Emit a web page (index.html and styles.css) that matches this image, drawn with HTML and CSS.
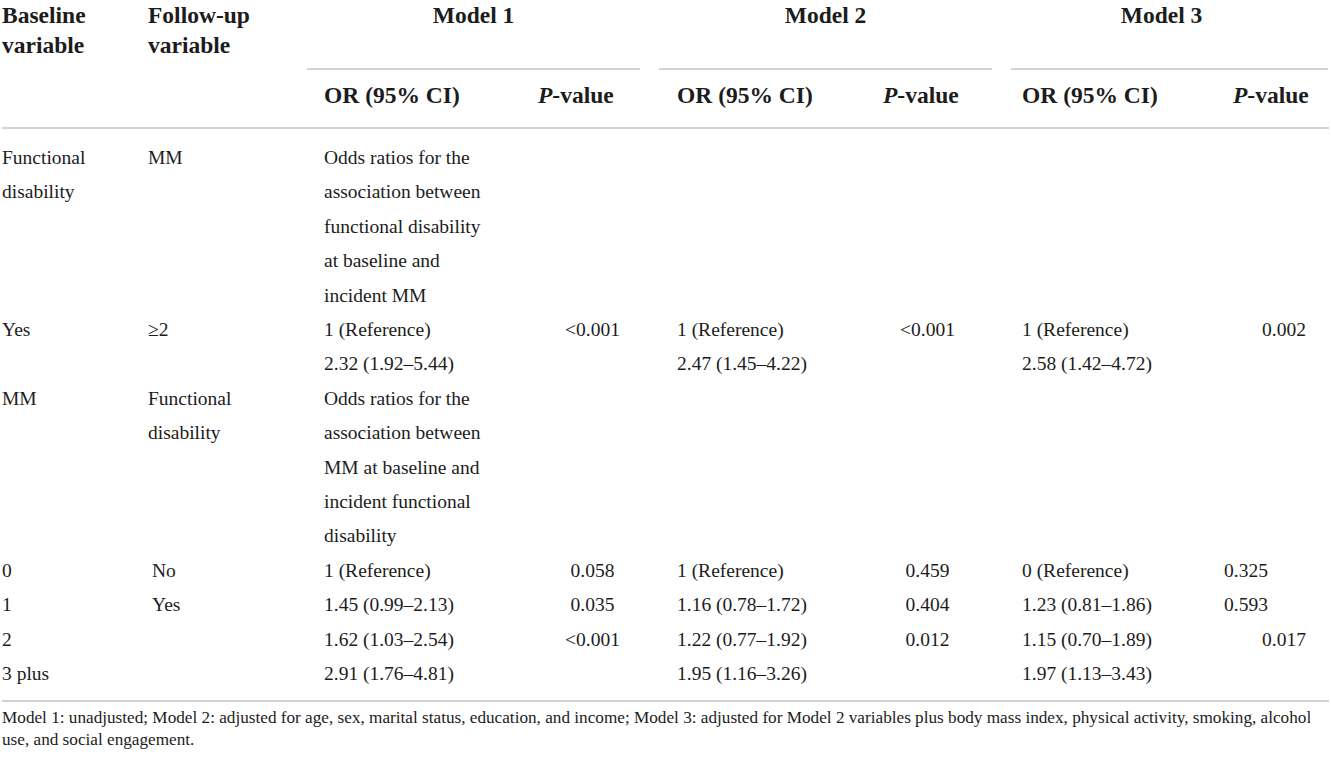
FILE: index.html
```html
<!DOCTYPE html>
<html lang="en">
<head>
  <meta charset="UTF-8" />
  <title>Odds ratios: functional disability and MM</title>
  <link rel="stylesheet" href="styles.css">
</head>
<body>
  <table class="results">
    <colgroup>
      <col class="c-base">
      <col class="c-follow">
      <col class="c-or1">
      <col class="c-p1">
      <col class="c-or2">
      <col class="c-p2">
      <col class="c-or3">
      <col class="c-p3">
    </colgroup>
    <thead>
      <tr class="head-top">
        <th class="var">Baseline<br>variable</th>
        <th class="var">Follow-up<br>variable</th>
        <th colspan="2" class="group"><div class="model m1">Model 1</div></th>
        <th colspan="2" class="group"><div class="model m2">Model 2</div></th>
        <th colspan="2" class="group"><div class="model m3">Model 3</div></th>
      </tr>
      <tr class="head-sub">
        <th></th>
        <th></th>
        <th class="or1">OR (95% CI)</th>
        <th class="p1"><i>P</i>-value</th>
        <th class="or2">OR (95% CI)</th>
        <th class="p2"><i>P</i>-value</th>
        <th class="or3">OR (95% CI)</th>
        <th class="p3"><i>P</i>-value</th>
      </tr>
    </thead>
    <tbody>
      <tr class="first">
        <td>Functional<br>disability</td>
        <td>MM</td>
        <td class="or1">Odds ratios for the<br>association between<br>functional disability<br>at baseline and<br>incident MM</td>
        <td></td>
        <td></td>
        <td></td>
        <td></td>
        <td></td>
      </tr>
      <tr>
        <td>Yes</td>
        <td>&ge;2</td>
        <td class="or1">1 (Reference)<br>2.32 (1.92&ndash;5.44)</td>
        <td class="p1">&lt;0.001</td>
        <td class="or2">1 (Reference)<br>2.47 (1.45&ndash;4.22)</td>
        <td class="p2">&lt;0.001</td>
        <td class="or3">1 (Reference)<br>2.58 (1.42&ndash;4.72)</td>
        <td class="p3 shift">0.002</td>
      </tr>
      <tr>
        <td>MM</td>
        <td>Functional<br>disability</td>
        <td class="or1">Odds ratios for the<br>association between<br>MM at baseline and<br>incident functional<br>disability</td>
        <td></td>
        <td></td>
        <td></td>
        <td></td>
        <td></td>
      </tr>
      <tr>
        <td>0</td>
        <td class="indent">No</td>
        <td class="or1">1 (Reference)</td>
        <td class="p1">0.058</td>
        <td class="or2">1 (Reference)</td>
        <td class="p2">0.459</td>
        <td class="or3">0 (Reference)</td>
        <td class="p3">0.325</td>
      </tr>
      <tr>
        <td>1</td>
        <td class="indent">Yes</td>
        <td class="or1">1.45 (0.99&ndash;2.13)</td>
        <td class="p1">0.035</td>
        <td class="or2">1.16 (0.78&ndash;1.72)</td>
        <td class="p2">0.404</td>
        <td class="or3">1.23 (0.81&ndash;1.86)</td>
        <td class="p3">0.593</td>
      </tr>
      <tr>
        <td>2</td>
        <td></td>
        <td class="or1">1.62 (1.03&ndash;2.54)</td>
        <td class="p1">&lt;0.001</td>
        <td class="or2">1.22 (0.77&ndash;1.92)</td>
        <td class="p2">0.012</td>
        <td class="or3">1.15 (0.70&ndash;1.89)</td>
        <td class="p3 shift">0.017</td>
      </tr>
      <tr class="last">
        <td>3 plus</td>
        <td></td>
        <td class="or1">2.91 (1.76&ndash;4.81)</td>
        <td></td>
        <td class="or2">1.95 (1.16&ndash;3.26)</td>
        <td></td>
        <td class="or3">1.97 (1.13&ndash;3.43)</td>
        <td></td>
      </tr>
    </tbody>
  </table>

  <p class="note">Model 1: unadjusted; Model 2: adjusted for age, sex, marital status, education, and income; Model 3: adjusted for Model 2 variables plus body mass index, physical activity, smoking, alcohol use, and social engagement.</p>
</body>
</html>
```

FILE: styles.css
```css
body {
  margin: 0;
  background-color: #fff;
  color: #1c1c1c;
  font-family: "Liberation Serif", "Times New Roman", serif;
}
.results {
  table-layout: fixed;
  border-collapse: separate;
  border-spacing: 0;
  width: 1327px;
  margin-left: 2px;
}
.c-base { width: 146px; }
.c-follow { width: 159px; }
.c-or1 { width: 228px; }
.c-p1 { width: 115px; }
.c-or2 { width: 230px; }
.c-p2 { width: 121px; }
.c-or3 { width: 221px; }
.c-p3 { width: 107px; }

th {
  font-weight: bold;
  font-size: 23.5px;
  line-height: 30px;
  text-align: left;
  vertical-align: top;
  padding: 0;
  white-space: nowrap;
}
.head-top th.var {
  padding-bottom: 10px;
}
.model {
  height: 68px;
  border-bottom: 2px solid #d3d3d3;
  text-align: center;
}
.m1 { margin-right: 10px; }
.m2 { margin-left: 9px; margin-right: 9px; }
.m3 { margin-left: 10px; margin-right: 1px; padding-right: 16px; }
.head-sub th {
  padding-top: 10px;
  padding-bottom: 17px;
  border-bottom: 2px solid #d3d3d3;
}
.head-sub th.p1 { padding-left: 3px; }
.head-sub th.p2 { padding-left: 3px; }
.head-sub th.p3 { padding-left: 11px; }
.head-sub th.or3 { padding-left: 21px; }

td {
  font-size: 19.5px;
  line-height: 34.4px;
  vertical-align: top;
  padding: 0;
  white-space: nowrap;
}
.or1 { padding-left: 17px; }
.or2 { padding-left: 27px; }
.or3 { padding-left: 21px; }
td.p1 { text-align: center; }
td.p2 { text-align: center; padding-right: 26px; }
td.p3 { padding-left: 2px; }
td.p3.shift { padding-left: 40px; }
td.indent { padding-left: 4px; }
tr.first td { padding-top: 12px; }
tr.last td {
  padding-bottom: 8px;
  border-bottom: 2px solid #d3d3d3;
}
.note {
  margin: 5px 0 0 2px;
  font-size: 17.2px;
  line-height: 22px;
}
```
